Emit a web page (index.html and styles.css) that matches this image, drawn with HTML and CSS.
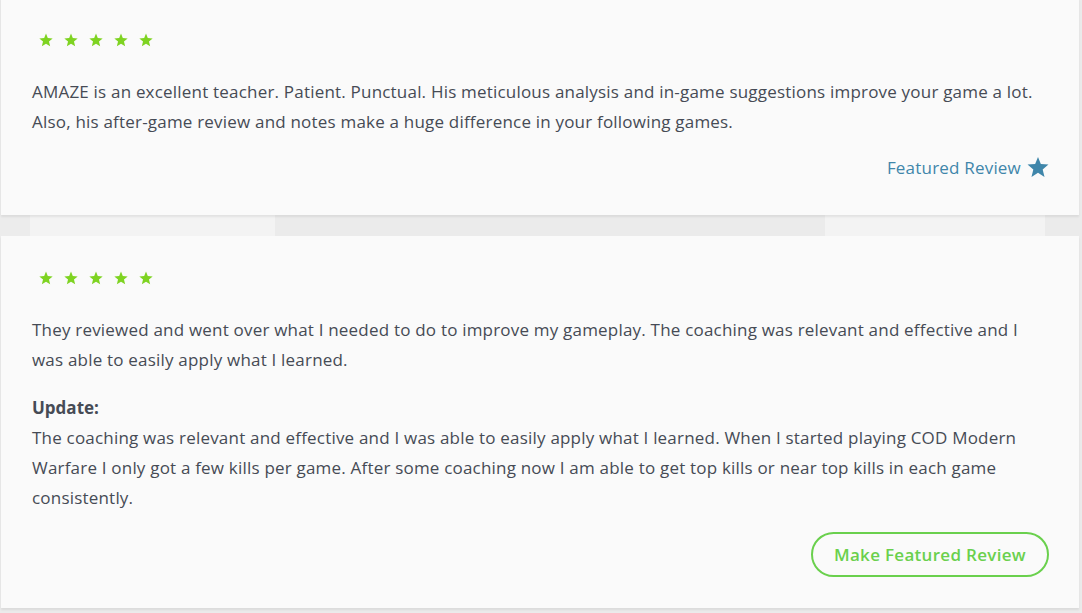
FILE: index.html
```html
<!DOCTYPE html>
<html>
<head>
<meta charset="utf-8">
<link rel="stylesheet" href="styles.css">
</head>
<body>
<div class="list">
  <div class="card card-first">
    <div class="stars">
      <svg class="star" viewBox="0 0 24 24"><polygon points="12,1 15.1,8.6 23.4,9.3 17.1,14.7 19.1,22.8 12,18.4 4.9,22.8 6.9,14.7 0.6,9.3 8.9,8.6"/></svg>
      <svg class="star" viewBox="0 0 24 24"><polygon points="12,1 15.1,8.6 23.4,9.3 17.1,14.7 19.1,22.8 12,18.4 4.9,22.8 6.9,14.7 0.6,9.3 8.9,8.6"/></svg>
      <svg class="star" viewBox="0 0 24 24"><polygon points="12,1 15.1,8.6 23.4,9.3 17.1,14.7 19.1,22.8 12,18.4 4.9,22.8 6.9,14.7 0.6,9.3 8.9,8.6"/></svg>
      <svg class="star" viewBox="0 0 24 24"><polygon points="12,1 15.1,8.6 23.4,9.3 17.1,14.7 19.1,22.8 12,18.4 4.9,22.8 6.9,14.7 0.6,9.3 8.9,8.6"/></svg>
      <svg class="star" viewBox="0 0 24 24"><polygon points="12,1 15.1,8.6 23.4,9.3 17.1,14.7 19.1,22.8 12,18.4 4.9,22.8 6.9,14.7 0.6,9.3 8.9,8.6"/></svg>
    </div>
    <p class="text">AMAZE is an excellent teacher. Patient. Punctual. His meticulous analysis and in-game suggestions improve your game a lot. Also, his after-game review and notes make a huge difference in your following games.</p>
    <div class="actions">
      <span class="featured">Featured Review
        <svg class="featured-star" viewBox="0 0 24 24"><polygon points="12,1 15.1,8.6 23.4,9.3 17.1,14.7 19.1,22.8 12,18.4 4.9,22.8 6.9,14.7 0.6,9.3 8.9,8.6"/></svg>
      </span>
    </div>
  </div>
  <div class="card">
    <div class="stars">
      <svg class="star" viewBox="0 0 24 24"><polygon points="12,1 15.1,8.6 23.4,9.3 17.1,14.7 19.1,22.8 12,18.4 4.9,22.8 6.9,14.7 0.6,9.3 8.9,8.6"/></svg>
      <svg class="star" viewBox="0 0 24 24"><polygon points="12,1 15.1,8.6 23.4,9.3 17.1,14.7 19.1,22.8 12,18.4 4.9,22.8 6.9,14.7 0.6,9.3 8.9,8.6"/></svg>
      <svg class="star" viewBox="0 0 24 24"><polygon points="12,1 15.1,8.6 23.4,9.3 17.1,14.7 19.1,22.8 12,18.4 4.9,22.8 6.9,14.7 0.6,9.3 8.9,8.6"/></svg>
      <svg class="star" viewBox="0 0 24 24"><polygon points="12,1 15.1,8.6 23.4,9.3 17.1,14.7 19.1,22.8 12,18.4 4.9,22.8 6.9,14.7 0.6,9.3 8.9,8.6"/></svg>
      <svg class="star" viewBox="0 0 24 24"><polygon points="12,1 15.1,8.6 23.4,9.3 17.1,14.7 19.1,22.8 12,18.4 4.9,22.8 6.9,14.7 0.6,9.3 8.9,8.6"/></svg>
    </div>
    <p class="text">They reviewed and went over what I needed to do to improve my gameplay. The coaching was relevant and effective and I was able to easily apply what I learned.</p>
    <p class="update-title">Update:</p>
    <p class="text">The coaching was relevant and effective and I was able to easily apply what I learned. When I started playing COD Modern Warfare I only got a few kills per game. After some coaching now I am able to get top kills or near top kills in each game consistently.</p>
    <div class="actions actions-button">
      <button class="make-btn">Make Featured Review</button>
    </div>
  </div>
</div>
</body>
</html>
```

FILE: styles.css
```css
html, body {
  margin: 0;
  padding: 0;
}
body {
  background-color: #ebebeb;
  background-image: linear-gradient(90deg, #ececec 0, #ececec 30px, #f3f3f3 30px, #f3f3f3 275px, #ebebeb 275px, #ebebeb 825px, #f3f3f3 825px, #f3f3f3 1045px, #ebebeb 1045px);
  background-size: 1082px 22px;
  background-position: 0 215px;
  background-repeat: no-repeat;
  font-family: "Open Sans", "Noto Sans", sans-serif;
  color: #464b55;
  width: 1082px;
  height: 613px;
  overflow: hidden;
}
.list {
  display: flex;
  flex-direction: column;
  gap: 21px;
  padding-left: 1px;
}
.card {
  width: 1078px;
  box-sizing: border-box;
  background: #fafafa;
  padding: 35px 30px 31px 31px;
  box-shadow: 0 2px 2px rgba(0, 0, 0, 0.07);
}
.card-first {
  margin-top: -2px;
  padding-bottom: 32px;
}
.stars {
  display: flex;
  gap: 11px;
  padding-left: 7px;
  height: 14px;
}
.star {
  width: 14px;
  height: 14px;
  fill: #7ed321;
}
.text {
  margin: 30px 0 0;
  font-size: 17px;
  line-height: 30px;
  letter-spacing: 0.2px;
}
.update-title {
  margin: 18px 0 0;
  font-size: 17px;
  line-height: 30px;
  font-weight: 700;
}
.update-title + .text {
  margin-top: 0;
}
.actions {
  display: flex;
  justify-content: flex-end;
  margin-top: 16px;
}
.featured {
  display: flex;
  align-items: center;
  gap: 6px;
  font-size: 17px;
  line-height: 30px;
  letter-spacing: 0.2px;
  color: #3f86aa;
}
.featured-star {
  width: 22px;
  height: 22px;
  fill: #3f86aa;
  margin-top: -3px;
}
.actions-button {
  margin-top: 19px;
}
.make-btn {
  font-family: "Open Sans", "Noto Sans", sans-serif;
  font-size: 17px;
  font-weight: 600;
  letter-spacing: 0.3px;
  color: #6ad04d;
  background: transparent;
  border: 2px solid #6ad04d;
  border-radius: 23px;
  height: 45px;
  width: 238px;
  padding: 0;
  cursor: pointer;
}
```
